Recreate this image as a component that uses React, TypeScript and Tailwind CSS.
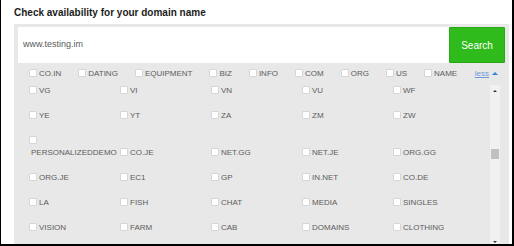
import React from 'react';

const topTlds = ['CO.IN', 'DATING', 'EQUIPMENT', 'BIZ', 'INFO', 'COM', 'ORG', 'US', 'NAME'];

const moreTlds = [
  'VG', 'VI', 'VN', 'VU', 'WF',
  'YE', 'YT', 'ZA', 'ZM', 'ZW',
  'PERSONALIZEDDEMO', 'CO.JE', 'NET.GG', 'NET.JE', 'ORG.GG',
  'ORG.JE', 'EC1', 'GP', 'IN.NET', 'CO.DE',
  'LA', 'FISH', 'CHAT', 'MEDIA', 'SINGLES',
  'VISION', 'FARM', 'CAB', 'DOMAINS', 'CLOTHING',
];

// small square checkbox used on every tld
const Box = () => (
  <span className="inline-block w-[8px] h-[8px] bg-white border border-[#d6d6d6] rounded-[1px] shrink-0" />
);

const TldCheck = ({ name }: { name: string }) => (
  <label className="flex flex-wrap items-center gap-y-[4px] py-[8px] leading-[9px] cursor-pointer">
    <Box />
    <span className="ml-[2px]">{name}</span>
  </label>
);

export default function App() {
  return (
    <div
      className="w-[514px] h-[246px] overflow-hidden bg-white border-l border-r-2 border-b-2 border-black text-[#5c5c5c]"
      style={{ fontFamily: '"Liberation Sans", Arial, sans-serif' }}
    >
      <h1 className="pl-[13px] h-[24px] flex items-center text-[10px] font-bold text-[#1c1c1c]">
        Check availability for your domain name
      </h1>

      <div className="ml-[13px] mr-[3px] h-[230px] bg-[#e8e8e8] px-[4px] pt-[3px]">
        {/* search bar */}
        <div className="flex h-[36px]">
          <div className="flex-1 bg-white flex items-center pl-[5px] text-[9px] text-[#5a5a5a]">
            www.testing.im
          </div>
          <button className="w-[56px] h-full bg-[#2fbb1b] border border-[#27a814] text-white text-[10px] rounded-[1px]">
            Search
          </button>
        </div>

        {/* popular tlds */}
        <div className="flex items-center pl-[11px] pt-[5.5px] h-[14.5px] text-[8px] leading-[9px]">
          {topTlds.map((t) => (
            <label key={t} className="flex items-center mr-[17px]">
              <Box />
              <span className="ml-[2px]">{t}</span>
            </label>
          ))}
          <a className="ml-auto mr-[7px] flex items-center text-[#6c9bd6] underline">
            less
            <span className="ml-[3px] w-0 h-0 border-l-[3px] border-r-[3px] border-b-[3px] border-l-transparent border-r-transparent border-b-[#3a84d4]" />
          </a>
        </div>

        {/* full list with scroll */}
        <div className="flex pl-[11px] h-[170px]">
          <div className="w-[455px] overflow-hidden">
            <div className="grid grid-cols-[repeat(5,91px)] items-end text-[8px]">
              {moreTlds.map((t) => (
                <TldCheck key={t} name={t} />
              ))}
            </div>
          </div>
          <div className="ml-[6px] mt-[7.5px] w-[10px] h-[165px] bg-[#f1f1f1] relative">
            <span className="absolute left-[3px] top-[5px] w-0 h-0 border-l-[2px] border-r-[2px] border-b-[2px] border-l-transparent border-r-transparent border-b-[#333]" />
            <span className="absolute left-[1px] top-[64px] w-[8px] h-[10px] bg-[#c1c1c1]" />
            <span className="absolute left-[3px] top-[156px] w-0 h-0 border-l-[2px] border-r-[2px] border-t-[2px] border-l-transparent border-r-transparent border-t-[#333]" />
          </div>
        </div>
      </div>
    </div>
  );
}
